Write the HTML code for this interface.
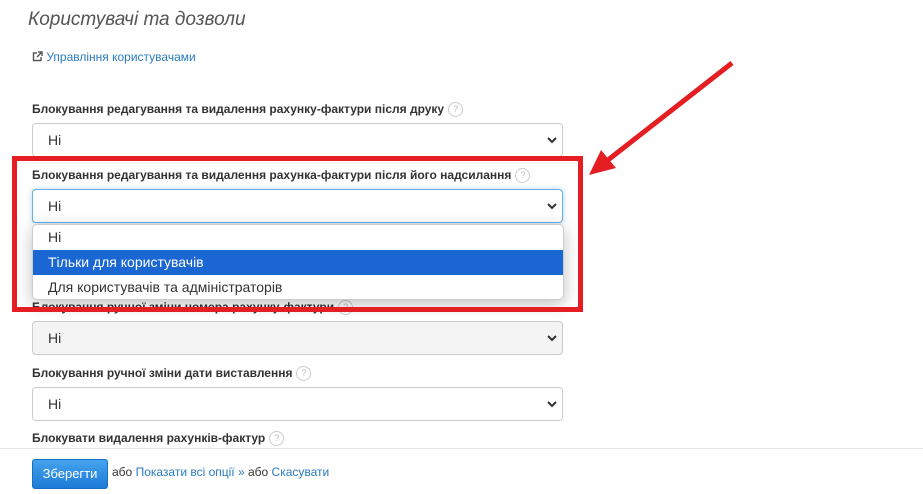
<!DOCTYPE html>
<html><head><meta charset="utf-8"><style>
body{margin:0;width:923px;height:493px;overflow:hidden;background:#fff;font-family:"Liberation Sans",Arial,sans-serif;position:relative}
.a{position:absolute}
.t{left:28px;top:9px;font-size:19px;font-style:italic;color:#555}
.lnk{left:32px;top:50px;font-size:12px;color:#2a7ac0}
.lbl{left:32px;font-size:12px;font-weight:bold;color:#333;white-space:nowrap}
.q{display:inline-block;width:13px;height:13px;border:1px solid #ccc;border-radius:50%;font-size:9px;color:#bbb;text-align:center;line-height:13px;font-weight:normal;vertical-align:middle;margin-left:4px}
.sel{left:32px;width:529px;height:32px;border:1px solid #ccc;border-radius:4px;background:#fff;font-size:14px;color:#333;box-sizing:content-box}
.sel span{position:absolute;left:15px;top:8px}
.sel svg{position:absolute;right:4px;top:11px}
.dd{left:32px;top:224px;width:530px;height:74px;border:1px solid #ccc;border-radius:5px;background:#fff;box-shadow:0 4px 16px rgba(0,0,0,.25);overflow:hidden;font-size:14px;color:#333}
.dd div{height:25px;line-height:25px;padding-left:15px}
</style></head><body>
<div class="a t">Користувачі та дозволи</div>
<div class="a lnk"><svg width="11" height="11" viewBox="0 0 11 11" style="vertical-align:-1px"><path d="M5 2H1.5v7.5H9V6" fill="none" stroke="#555" stroke-width="1.4"/><path d="M6 1h4v4M10 1L5 6" fill="none" stroke="#555" stroke-width="1.4"/></svg> Управління користувачами</div>

<div class="a lbl" style="top:102px">Блокування редагування та видалення рахунку-фактури після друку<span class="q">?</span></div>
<div class="a sel" style="top:123px"><span>Ні</span><svg width="12" height="10"><path d="M2 3l4 4 4-4" fill="none" stroke="#333" stroke-width="2"/></svg></div>

<div class="a lbl" style="top:168px">Блокування редагування та видалення рахунка-фактури після його надсилання<span class="q">?</span></div>
<div class="a sel" style="top:189px;border-color:#66afe9;box-shadow:0 0 6px rgba(102,175,233,.5)"><span>Ні</span><svg width="12" height="10"><path d="M2 3l4 4 4-4" fill="none" stroke="#333" stroke-width="2"/></svg></div>

<div class="a lbl" style="top:300px">Блокування ручної зміни номера рахунку-фактури<span class="q">?</span></div>
<div class="a sel" style="top:321px;background:#f4f4f4"><span>Ні</span><svg width="12" height="10"><path d="M2 3l4 4 4-4" fill="none" stroke="#333" stroke-width="2"/></svg></div>

<div class="a lbl" style="top:366px">Блокування ручної зміни дати виставлення<span class="q">?</span></div>
<div class="a sel" style="top:387px"><span>Ні</span><svg width="12" height="10"><path d="M2 3l4 4 4-4" fill="none" stroke="#333" stroke-width="2"/></svg></div>

<div class="a lbl" style="top:431px">Блокувати видалення рахунків-фактур<span class="q">?</span></div>

<div class="a dd"><div>Ні</div><div style="background:#1a67d4;color:#fff">Тільки для користувачів</div><div>Для користувачів та адміністраторів</div></div>

<div class="a" style="left:12px;top:156px;width:561px;height:146px;border:5px solid #e41e22"></div>
<svg class="a" style="left:0;top:0" width="923" height="493"><line x1="732" y1="63" x2="608" y2="160" stroke="#e41e22" stroke-width="5"/><polygon points="589,175 601,150 616,168" fill="#e41e22"/></svg>

<div class="a" style="left:0;top:448px;width:923px;height:45px;background:#fff;border-top:1px solid #e5e5e5"></div>
<div class="a sel" style="top:454px;border-color:#f2f2f2"></div>
<div class="a" style="left:28px;top:452px;width:900px;height:41px;background:rgba(255,255,255,.85)"></div>
<div class="a" style="left:32px;top:459px;width:76px;height:30px;border-radius:3px;background:linear-gradient(#45a3ee,#1c7ad6);border:1px solid #1a6fc4;box-sizing:border-box;color:#fff;font-size:13px;line-height:28px;text-align:center">Зберегти</div>
<div class="a" style="left:112px;top:465px;font-size:12px;color:#333">або <span style="color:#2a7ac0">Показати всі опції »</span> або <span style="color:#2a7ac0">Скасувати</span></div>
</body></html>
